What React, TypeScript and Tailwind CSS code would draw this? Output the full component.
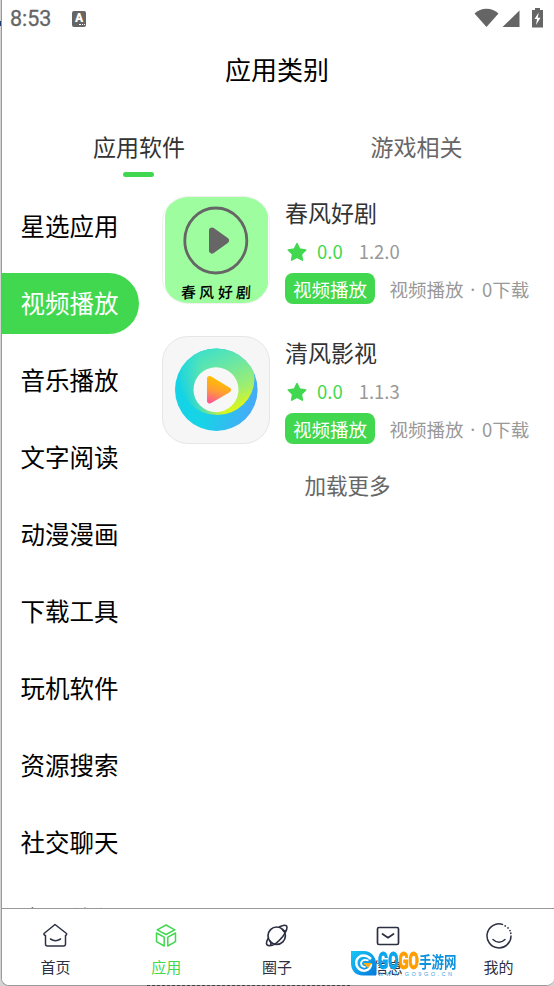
import type { ReactNode } from "react";

const FONT = "font-['Noto_Sans_CJK_SC',sans-serif]";

const categories = [
  "星选应用",
  "视频播放",
  "音乐播放",
  "文字阅读",
  "动漫漫画",
  "下载工具",
  "玩机软件",
  "资源搜索",
  "社交聊天",
  "实用软件",
];

interface AppInfo {
  name: string;
  version: string;
  icon: ReactNode;
}

function ChunfengIcon() {
  return (
    <div className="relative h-[108px] w-[108px] overflow-hidden rounded-[26px] border border-[#f0f0f0] bg-white px-[1.500px]">
      <div className="h-full w-full rounded-[20px] bg-[#9dfd9f]">
        <svg viewBox="0 0 103 106" className="h-[106px] w-[103px]">
          <ellipse cx="50.800" cy="43.500" rx="31" ry="32.500" fill="none" stroke="#666" strokeWidth="2.800" />
          <path d="M47 33.500 L61 43.500 L47 53.500 Z" fill="#666" stroke="#666" strokeWidth="6" strokeLinejoin="round" />
        </svg>
      </div>
      <div className="absolute inset-x-0 bottom-px flex justify-center gap-[3.500px] text-[15px] leading-[20px] font-medium text-black">
        <span className="-rotate-6 -skew-x-6">春</span>
        <span className="-rotate-3 -skew-x-3">风</span>
        <span className="-rotate-6 -skew-x-6">好</span>
        <span className="-rotate-3 -skew-x-6">剧</span>
      </div>
    </div>
  );
}

function QingfengIcon() {
  return (
    <div className="h-[108px] w-[108px] overflow-hidden rounded-[26px] border border-[#e6e6e6] bg-[#f6f6f6]">
      <svg viewBox="163 337 106 106" className="h-full w-full">
        <defs>
          <linearGradient id="ring" x1="0" y1="0.5" x2="1" y2="0.75">
            <stop offset="0" stopColor="#14d3e6" />
            <stop offset="0.4" stopColor="#17d3e6" />
            <stop offset="1" stopColor="#4ba6fa" />
          </linearGradient>
          <linearGradient id="lime" gradientUnits="userSpaceOnUse" x1="200" y1="346" x2="231" y2="414">
            <stop offset="0" stopColor="#35dfcf" />
            <stop offset="0.350" stopColor="#66e6a8" />
            <stop offset="0.750" stopColor="#a0ee6e" />
            <stop offset="1" stopColor="#e6f70c" />
          </linearGradient>
          <linearGradient id="fade" gradientUnits="userSpaceOnUse" x1="184" y1="400" x2="212" y2="388">
            <stop offset="0" stopColor="#fff" stopOpacity="0" />
            <stop offset="1" stopColor="#fff" />
          </linearGradient>
          <mask id="fadeMask">
            <rect x="163" y="337" width="106" height="106" fill="url(#fade)" />
          </mask>
          <clipPath id="ringClip">
            <circle cx="216.300" cy="389.700" r="41.300" />
          </clipPath>
          <linearGradient id="play" x1="0.3" y1="0" x2="0" y2="1">
            <stop offset="0" stopColor="#ffbd00" />
            <stop offset="0.5" stopColor="#ff9d35" />
            <stop offset="1" stopColor="#ff5c8c" />
          </linearGradient>
        </defs>
        <circle cx="216.300" cy="389.700" r="41.300" fill="url(#ring)" />
        <g clipPath="url(#ringClip)">
          <ellipse cx="217" cy="378.500" rx="37.500" ry="36.500" fill="url(#lime)" mask="url(#fadeMask)" />
        </g>
        <circle cx="216" cy="389.700" r="22.500" fill="#f7f7f7" />
        <path d="M209.500 378.500 L228.500 390 L209.500 401 Z" fill="url(#play)" stroke="url(#play)" strokeWidth="5" strokeLinejoin="round" />
      </svg>
    </div>
  );
}

const apps: AppInfo[] = [
  { name: "春风好剧", version: "1.2.0", icon: <ChunfengIcon /> },
  { name: "清风影视", version: "1.1.3", icon: <QingfengIcon /> },
];

function StatusBar() {
  return (
    <div className="flex h-[38px] items-center justify-between pr-[10px] pl-[8px] text-[#656565]">
      <div className="flex items-center">
        <span className="w-[62px] font-[Roboto,sans-serif] text-[21.500px] leading-[40px]">
          <span className="[-webkit-text-stroke:.3px_currentColor]">8:53</span>
        </span>
        <span className="relative h-[16px] w-[14px] rounded-[2px] bg-[#656565] text-center font-[Roboto,sans-serif] text-[12px] leading-[15px] font-black text-white">
          A
          <span className="absolute right-px bottom-[2px] w-[6px] border-b border-dotted border-white" />
        </span>
      </div>
      <svg width="70" height="22" viewBox="0 0 70 22" fill="currentColor" className="-mt-[2px]">
        <path d="M12.500 20 L.500 6.500 Q5.500 1.700 12.500 1.700 Q19.500 1.700 24.500 6.500 Z" />
        <path d="M28.500 20 L45.500 3.500 V20 Z" />
        <path d="M61 1 H66 V3 H69 V20.500 H58 V3 H61 Z" />
        <path d="M64.700 5.500 L60.500 12 H63 L62 18 L66.500 10.700 H63.800 Z" fill="#fff" />
      </svg>
    </div>
  );
}

function AppRow({ app }: { app: AppInfo }) {
  return (
    <div className="flex h-[108px] gap-[15px]">
      {app.icon}
      <div className="flex flex-col whitespace-nowrap">
        <span className="h-[35px] text-[23px] leading-[33px] text-[#333]">{app.name}</span>
        <div className="flex h-[42px] items-center text-[18.500px] text-[#999]">
          <svg width="22" height="22" viewBox="0 0 22 22" className="mr-[9px] ml-px">
            <path
              d="M11 2.500 L13.700 8 L19.700 8.900 L15.400 13.200 L16.400 19.200 L11 16.400 L5.600 19.200 L6.600 13.200 L2.300 8.900 L8.300 8 Z"
              fill="#41d84f"
              stroke="#41d84f"
              strokeWidth="1.500"
              strokeLinejoin="round"
            />
          </svg>
          <span className="mr-4 text-[#41d84f]">0.0</span>
          <span>{app.version}</span>
        </div>
        <div className="flex h-[31px] items-center text-[18.500px]">
          <span className="mr-[14.500px] h-[31px] w-[90px] rounded-[8px] bg-[#41d84f] text-center leading-[32px] text-white">
            视频播放
          </span>
          <span className="flex leading-[32px] text-[#999]">
            视频播放<span className="w-[18.500px] text-center font-['Noto_Sans',sans-serif]">·</span>0下载
          </span>
        </div>
      </div>
    </div>
  );
}

function NavItem({ label, active, children }: { label: string; active?: boolean; children: ReactNode }) {
  return (
    <div className={`flex flex-1 flex-col items-center pt-[12px] ${active ? "text-[#41d84f]" : "text-[#2c3042]"}`}>
      <svg
        width="30"
        height="30"
        viewBox="0 0 30 30"
        fill="none"
        stroke="currentColor"
        strokeWidth="1.500"
        strokeLinecap="round"
        strokeLinejoin="round"
      >
        {children}
      </svg>
      <span className="mt-[5px] text-[15px] leading-[22px]">{label}</span>
    </div>
  );
}

function BottomNav() {
  return (
    <nav className="-ml-[2px] flex h-[77px] shrink-0 border-t border-[#999] bg-white">
      <NavItem label="首页">
        <path d="M4 12.500 L15 3.500 L26.500 12.500 Q27 14 25.500 14.500 V23 Q25.500 25 23.500 25 H7.500 Q5.500 25 5.500 23 V14.500 Q3.500 14 4 12.500 Z" />
        <path d="M10.500 18 Q15.500 21.300 20.500 18" />
      </NavItem>
      <NavItem label="应用" active>
        <path d="M15 4 L23.800 8.800 L15 13.500 L6.200 8.800 Z" />
        <path d="M5.500 12 L13.200 16.200 V25 L5.500 20.700 Z" />
        <path d="M24.500 12 L16.800 16.200 V25 L24.500 20.700 Z" />
      </NavItem>
      <NavItem label="圈子">
        <circle cx="14.700" cy="14.700" r="8.700" strokeWidth="1.700" />
        <path
          d="M17.500 5.800 Q22.500 3.200 24.500 4.800 Q26.500 7.500 20.800 15.500 Q13 25 7.500 24.800 Q2 24.200 6.300 17.200 M20.500 8.500 Q22.800 12 23 9.500 M7.500 19.500 Q10 22 8.500 24"
          strokeWidth="1.600"
        />
      </NavItem>
      <NavItem label="信息">
        <rect x="4.500" y="6.500" width="21" height="17" rx="1.500" strokeWidth="1.700" />
        <path d="M9.500 13 L15 16.700 L20.500 13" strokeWidth="1.700" />
      </NavItem>
      <NavItem label="我的">
        <path d="M18.500 3.400 A12 12 0 1 0 27 15" />
        <path d="M9 18.500 Q15 24 21 18.500" />
        <path d="M21.200 4.800 v.1 M24 6.900 v.1 M26 9.500 v.1 M26.800 12.200 v.1" strokeWidth="1.700" />
      </NavItem>
    </nav>
  );
}

function Watermark() {
  return (
    <div className="absolute top-[951px] left-[350px] flex items-start">
      <svg width="27" height="25" viewBox="0 0 27 25">
        <defs>
          <linearGradient id="drop" x1="0" y1="0" x2="1" y2="1">
            <stop offset="0" stopColor="#19c8f5" />
            <stop offset="1" stopColor="#0679dc" />
          </linearGradient>
        </defs>
        <path d="M1 0 H14 C21 0 26 6 26 12.500 V24.500 H13 C5 24.500 1 19 1 12 Z" fill="url(#drop)" />
        <path d="M21 8 Q16 3 10.500 5 Q5 8 6.500 14 Q9 20.500 15.500 19.500 Q20.500 18.500 21 13" fill="none" stroke="#fff" strokeWidth="2.500" />
        <path d="M18.500 9.500 Q12.500 7.500 11 12 Q11 16 15.500 16" fill="none" stroke="#fff" strokeWidth="1.800" />
        <path d="M13 12 H22 L18 17 Z" fill="#ffab14" />
      </svg>
      <div className="ml-px w-[81px]">
        <div className="flex h-[20px] items-center whitespace-nowrap">
          <span className="w-[41px] shrink-0 origin-left scale-x-[.620] font-[Roboto,sans-serif] text-[24px] leading-[22px] font-black text-[#0ba5ee] [-webkit-text-stroke:.8px_currentColor]">
            GO<span className="text-[#ff9d00]">GO</span>
          </span>
          <span className="origin-left scale-x-[.780] text-[16px] leading-[20px] font-bold text-[#0b91dd]">手游网</span>
        </div>
        <div className="font-['Liberation_Sans',sans-serif] text-[5.500px] leading-[6px] tracking-[2.500px] whitespace-nowrap text-[#36a5e5]">
          WWW.GO9GO.CN
        </div>
      </div>
    </div>
  );
}

export default function App() {
  return (
    <div className={`relative h-[986px] w-[554px] overflow-hidden bg-[#d4d4d4] pl-px ${FONT}`}>
      <div className="flex h-[986px] flex-col overflow-hidden rounded-b-[8px] border-b border-l border-[#999] bg-white">
        <StatusBar />
        <h1 className="h-[64px] pr-[2px] text-center text-[26px] leading-[62px] text-black">应用类别</h1>
        <div className="flex h-[94px] pt-[27px] text-[23px] leading-[34px]">
          <div className="flex w-[273px] flex-col items-center text-[#333]">
            <span className="pl-px">应用软件</span>
            <span className="mt-[9px] h-[5px] w-[31px] rounded-full bg-[#41d84f]" />
          </div>
          <div className="flex-1 pl-[95.500px] text-[#666]">游戏相关</div>
        </div>
        <div className="flex min-h-0 flex-1 overflow-hidden">
          <aside className="flex w-[137px] flex-col gap-4">
            {categories.map((name) => (
              <div
                key={name}
                className={`h-[61px] shrink-0 pl-[18.500px] text-[24.500px] leading-[60px] ${
                  name === "视频播放" ? "rounded-r-full bg-[#41d84f] text-white" : "text-black"
                }`}
              >
                {name}
              </div>
            ))}
          </aside>
          <main className="flex flex-1 flex-col gap-8 pl-[23px]">
            {apps.map((app) => (
              <AppRow key={app.name} app={app} />
            ))}
            <div className="-mt-[7px] pr-[21px] text-center text-[21.500px] leading-[32px] text-[#666]">加载更多</div>
          </main>
        </div>
        <BottomNav />
      </div>
      <div className="absolute top-[21px] left-0 h-[5px] w-px bg-[#1d3c6e]" />
      <div className="absolute bottom-0 left-[147px] w-[203px] border-b border-dashed border-[#444]" />
      <Watermark />
    </div>
  );
}
